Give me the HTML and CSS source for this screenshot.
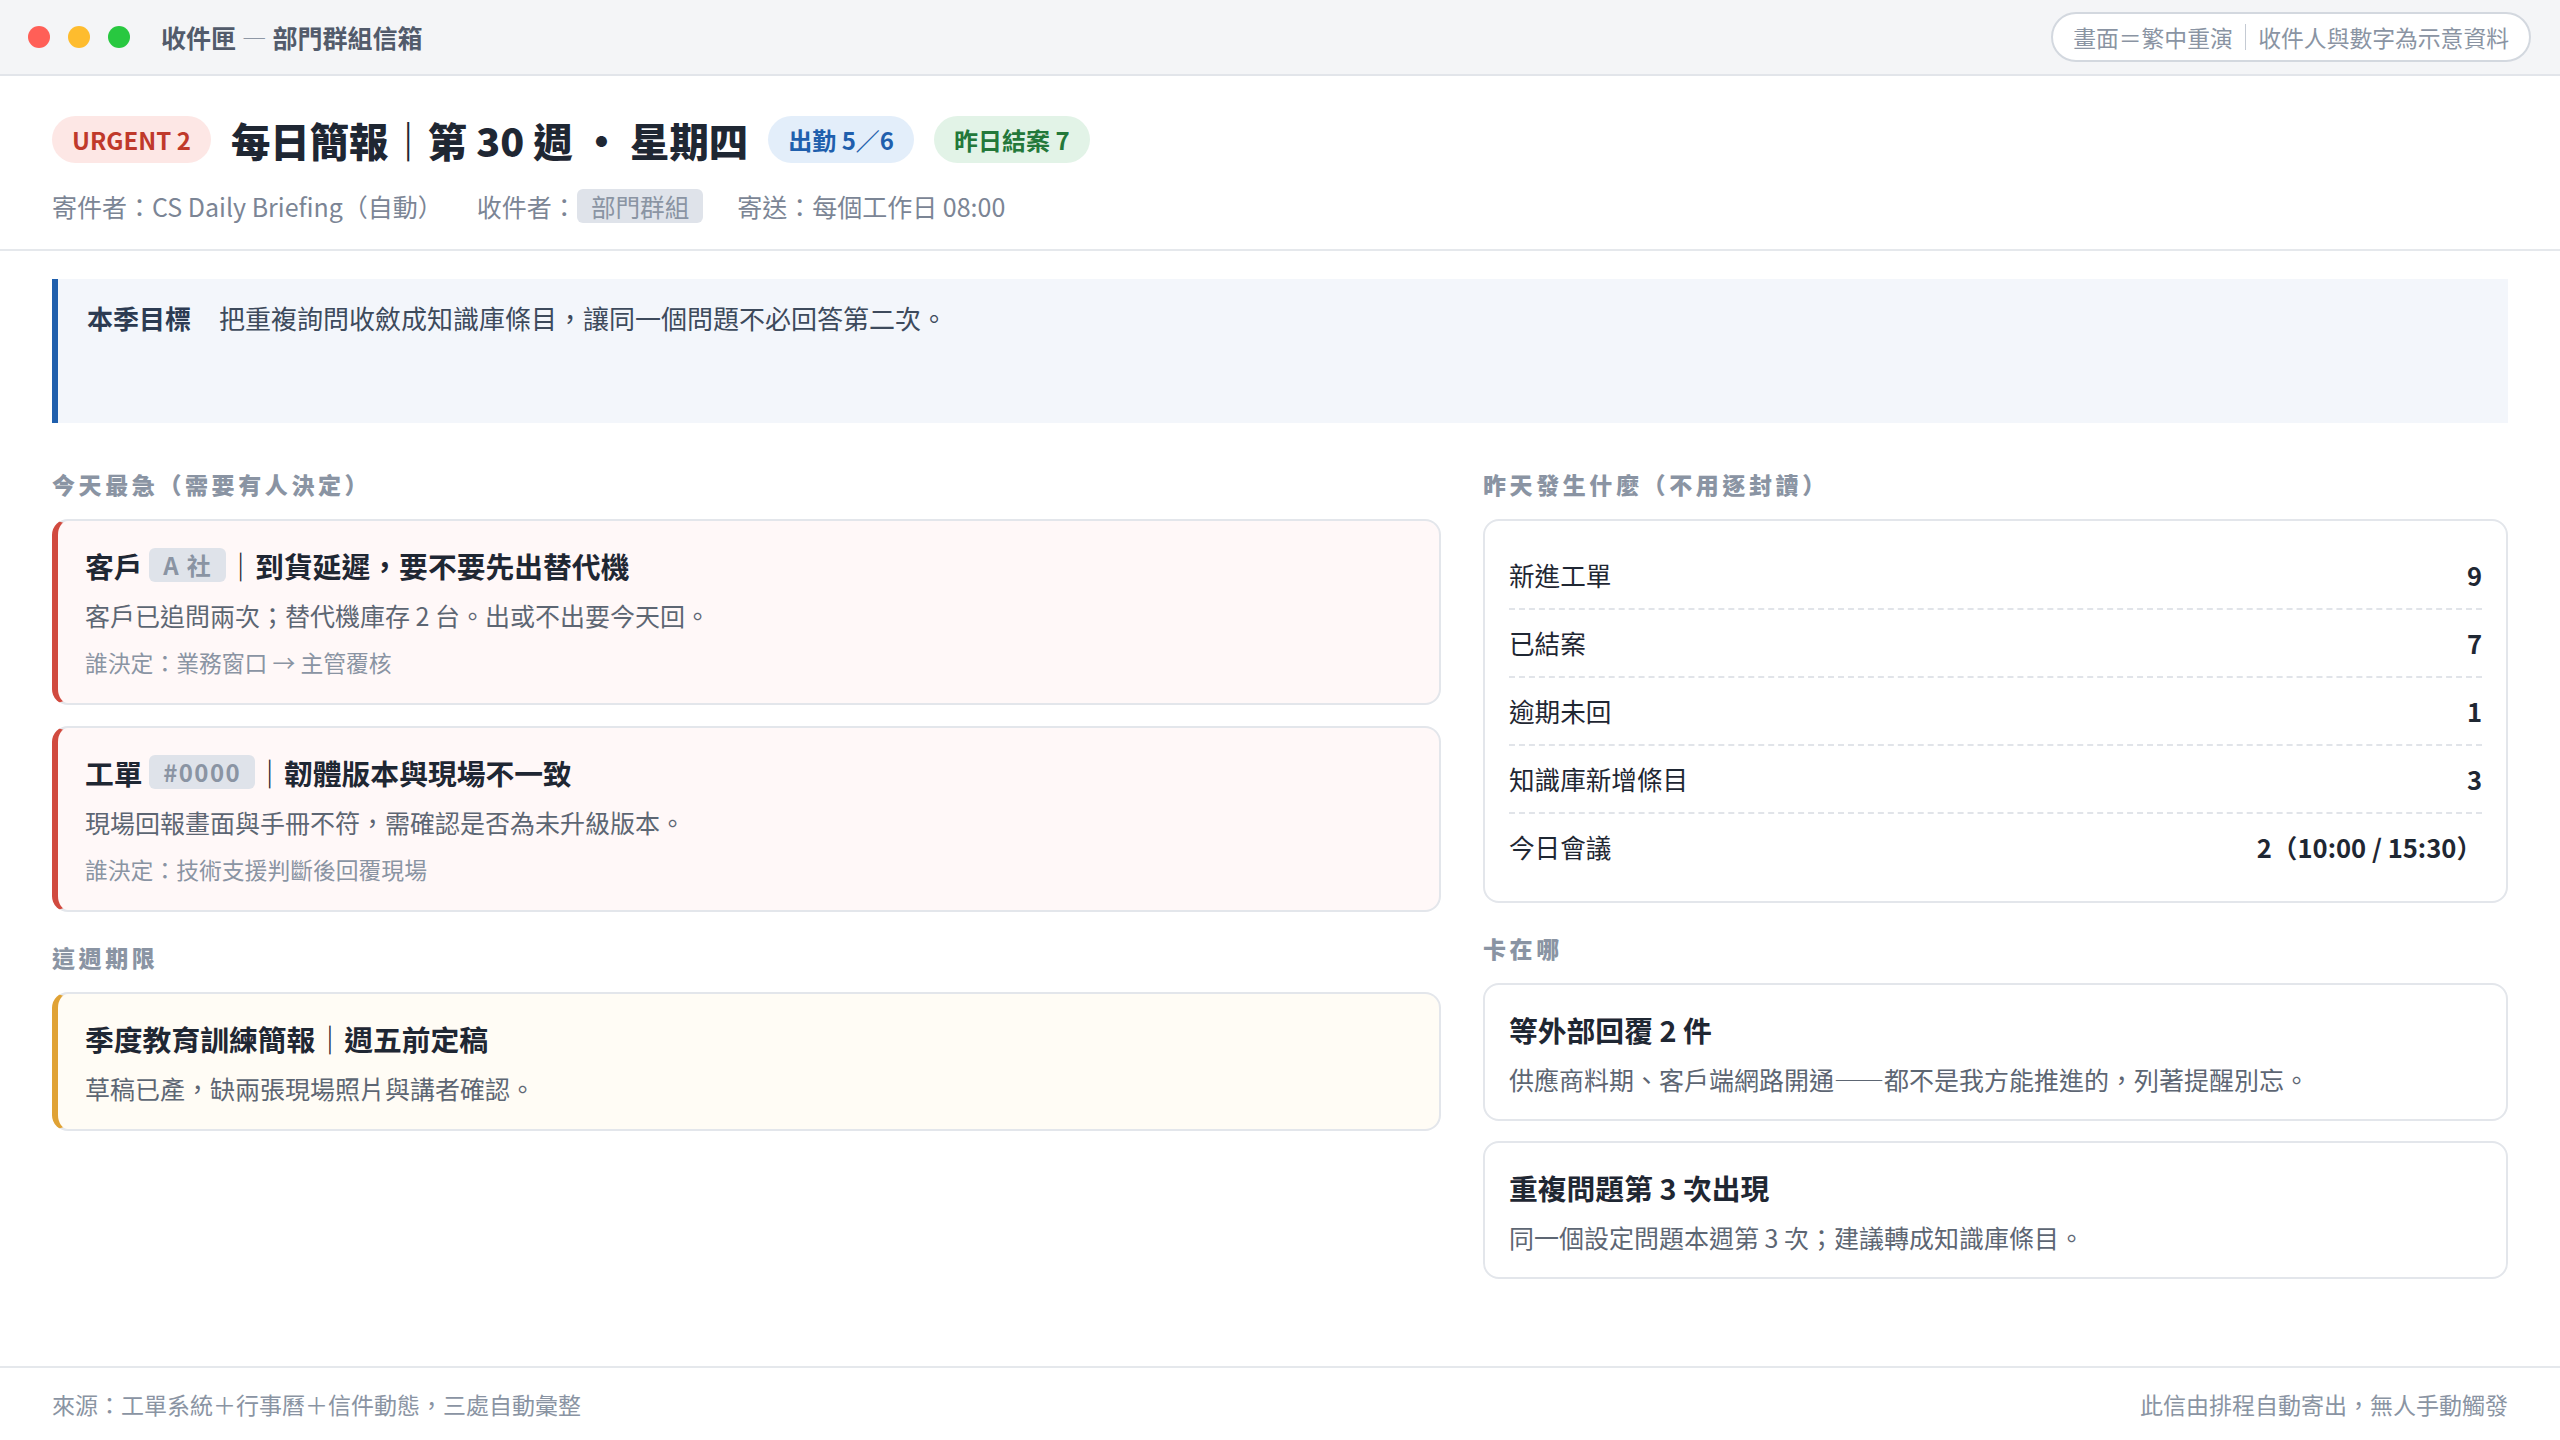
FILE: index.html
```html
<!DOCTYPE html>
<html lang="zh-Hant">
<head>
  <meta charset="UTF-8" />
  <meta name="viewport" content="width=device-width, initial-scale=1.0"/>
  <title>收件匣 — 部門群組信箱</title>
  <link rel="stylesheet" href="styles.css">
</head>
<body>
  <div class="titlebar">
    <div class="lights">
      <span class="light red"></span>
      <span class="light yellow"></span>
      <span class="light green"></span>
    </div>
    <div class="window-title">收件匣 <span class="dash">—</span> 部門群組信箱</div>
    <div class="note-pill">畫面＝繁中重演<span class="bar"></span>收件人與數字為示意資料</div>
  </div>

  <header class="mail-header">
    <div class="title-row">
      <span class="badge urgent">URGENT 2</span>
      <h1>每日簡報｜第 30 週 ・ 星期四</h1>
      <span class="badge blue">出勤 5／6</span>
      <span class="badge green">昨日結案 7</span>
    </div>
    <div class="meta">
      <span>寄件者：CS Daily Briefing（自動）</span>
      <span>收件者：<span class="chip">部門群組</span></span>
      <span>寄送：每個工作日 08:00</span>
    </div>
  </header>

  <main class="content">
    <div class="goal"><strong>本季目標</strong>把重複詢問收斂成知識庫條目，讓同一個問題不必回答第二次。</div>

    <div class="columns">
      <div class="col">
        <section class="block">
          <h2 class="block-title">今天最急（需要有人決定）</h2>
          <div class="cards">
            <div class="card accent-red">
              <h3>客戶 <span class="tag">A 社</span>｜到貨延遲，要不要先出替代機</h3>
              <p class="desc">客戶已追問兩次；替代機庫存 2 台。出或不出要今天回。</p>
              <p class="who">誰決定：業務窗口 → 主管覆核</p>
            </div>
            <div class="card accent-red">
              <h3>工單 <span class="tag">#0000</span>｜韌體版本與現場不一致</h3>
              <p class="desc">現場回報畫面與手冊不符，需確認是否為未升級版本。</p>
              <p class="who">誰決定：技術支援判斷後回覆現場</p>
            </div>
          </div>
        </section>

        <section class="block">
          <h2 class="block-title">這週期限</h2>
          <div class="cards">
            <div class="card accent-amber">
              <h3>季度教育訓練簡報｜週五前定稿</h3>
              <p class="desc">草稿已產，缺兩張現場照片與講者確認。</p>
            </div>
          </div>
        </section>
      </div>

      <div class="col">
        <section class="block">
          <h2 class="block-title">昨天發生什麼（不用逐封讀）</h2>
          <div class="card stats">
            <div class="stat-row"><span>新進工單</span><b>9</b></div>
            <div class="stat-row"><span>已結案</span><b>7</b></div>
            <div class="stat-row"><span>逾期未回</span><b>1</b></div>
            <div class="stat-row"><span>知識庫新增條目</span><b>3</b></div>
            <div class="stat-row"><span>今日會議</span><b>2（10:00 / 15:30）</b></div>
          </div>
        </section>

        <section class="block">
          <h2 class="block-title">卡在哪</h2>
          <div class="cards">
            <div class="card">
              <h3>等外部回覆 2 件</h3>
              <p class="desc">供應商料期、客戶端網路開通——都不是我方能推進的，列著提醒別忘。</p>
            </div>
            <div class="card">
              <h3>重複問題第 3 次出現</h3>
              <p class="desc">同一個設定問題本週第 3 次；建議轉成知識庫條目。</p>
            </div>
          </div>
        </section>
      </div>
    </div>
  </main>

  <footer class="footer">
    <span>來源：工單系統＋行事曆＋信件動態，三處自動彙整</span>
    <span>此信由排程自動寄出，無人手動觸發</span>
  </footer>
</body>
</html>
```

FILE: styles.css
```css
* {
  box-sizing: border-box;
}

body {
  margin: 0;
  min-height: 100vh;
  display: flex;
  flex-direction: column;
  font-family: "Noto Sans CJK TC", "Noto Sans CJK SC", sans-serif;
  color: #1f2733;
  background: #fff;
}

/* window chrome */
.titlebar {
  height: 76px;
  flex-shrink: 0;
  display: flex;
  align-items: center;
  padding: 0 29px 0 28px;
  background: #f4f5f7;
  border-bottom: 2px solid #e2e5ea;
}

.lights {
  display: flex;
  gap: 18px;
  margin-right: 31px;
}

.light {
  width: 22px;
  height: 22px;
  border-radius: 50%;
}

.light.red { background: #ff5f57; }
.light.yellow { background: #febc2e; }
.light.green { background: #28c840; }

.window-title {
  font-size: 25px;
  font-weight: 700;
  color: #525b6b;
}

.window-title .dash {
  color: #8e97a5;
  font-weight: 400;
}

.note-pill {
  margin-left: auto;
  height: 50px;
  display: flex;
  align-items: center;
  padding: 0 20px;
  border: 2px solid #d3d8df;
  border-radius: 25px;
  background: #fff;
  font-size: 22.8px;
  color: #8a94a3;
}

.note-pill .bar {
  width: 1.5px;
  height: 26px;
  background: #c4cad3;
  margin: 0 12px;
}

/* mail header */
.mail-header {
  padding: 40px 52px 25px;
  border-bottom: 2px solid #e5e8ec;
}

.title-row {
  display: flex;
  align-items: center;
  gap: 20px;
  height: 47px;
}

.title-row h1 {
  margin: 0;
  font-size: 39.4px;
  font-weight: 900;
  line-height: 47px;
  color: #1f2733;
}

.badge {
  height: 47px;
  display: inline-flex;
  align-items: center;
  padding: 0 20px;
  border-radius: 24px;
  font-size: 24px;
  font-weight: 700;
}

.badge.urgent {
  background: #fde7e5;
  color: #c0392b;
}

.badge.blue {
  background: #e3eefa;
  color: #1f5fad;
}

.badge.green {
  background: #e2f3e7;
  color: #23783a;
}

.meta {
  margin-top: 25px;
  display: flex;
  align-items: center;
  gap: 34px;
  font-size: 25px;
  line-height: 36px;
  color: #7b8595;
}

.meta .chip {
  display: inline-block;
  background: #dfe3ea;
  color: #8a94a3;
  font-size: 24.6px;
  line-height: 34px;
  padding: 0 14px;
  border-radius: 6px;
}

/* body */
.content {
  flex: 1;
  padding: 28px 52px 40px;
}

.goal {
  min-height: 144px;
  background: #f3f6fb;
  border-left: 6px solid #1f5fad;
  padding: 20px 29px;
  font-size: 26px;
  line-height: 38px;
  color: #3d4a5c;
}

.goal strong {
  color: #2c3b52;
  font-weight: 700;
  margin-right: 28px;
}

.columns {
  display: grid;
  grid-template-columns: minmax(0, 1.355fr) minmax(0, 1fr);
  gap: 42px;
  margin-top: 46px;
  align-items: start;
}

.block + .block {
  margin-top: 30px;
}

.block-title {
  margin: 0 0 20px;
  font-size: 23px;
  line-height: 30px;
  font-weight: 800;
  color: #8a94a3;
  letter-spacing: 3.6px;
}

.cards {
  display: flex;
  flex-direction: column;
  gap: 20px;
}

.col:first-child .cards {
  gap: 21px;
}

.card {
  border: 2px solid #e3e6eb;
  border-radius: 16px;
  background: #fff;
  padding: 25px 24px 21px;
}

.card.accent-red {
  border-left: 6px solid #d14a3f;
  background: #fff8f8;
  padding: 25px 27px 23px;
}

.card.accent-amber {
  border-left: 6px solid #e0a234;
  background: #fffcf5;
  padding: 25px 27px 22px;
}

.card h3 {
  margin: 0;
  font-size: 28.8px;
  line-height: 40px;
  font-weight: 700;
  color: #1f2733;
}

.card .desc {
  margin: 10px 0 0;
  font-size: 25px;
  line-height: 38px;
  color: #5d6673;
}

.card .who {
  margin: 12px 0 0;
  font-size: 22.8px;
  line-height: 34px;
  color: #8a94a3;
}

.tag {
  display: inline-block;
  vertical-align: 3px;
  background: #dfe3ea;
  color: #8a94a3;
  font-size: 24px;
  line-height: 34px;
  padding: 0 14px;
  border-radius: 6px;
  letter-spacing: 0.06em;
}

/* stats */
.card.stats {
  padding: 21px 24px;
}

.stat-row {
  display: flex;
  justify-content: space-between;
  padding: 19px 0;
  font-size: 25.6px;
  line-height: 28px;
  border-bottom: 2px dashed #e1e4e9;
}

.stat-row:last-child {
  border-bottom: none;
}

.stat-row b {
  font-weight: 700;
}

/* footer */
.footer {
  display: flex;
  justify-content: space-between;
  padding: 18px 52px;
  border-top: 2px solid #e5e8ec;
  font-size: 23px;
  line-height: 36px;
  color: #8a94a3;
}
```
